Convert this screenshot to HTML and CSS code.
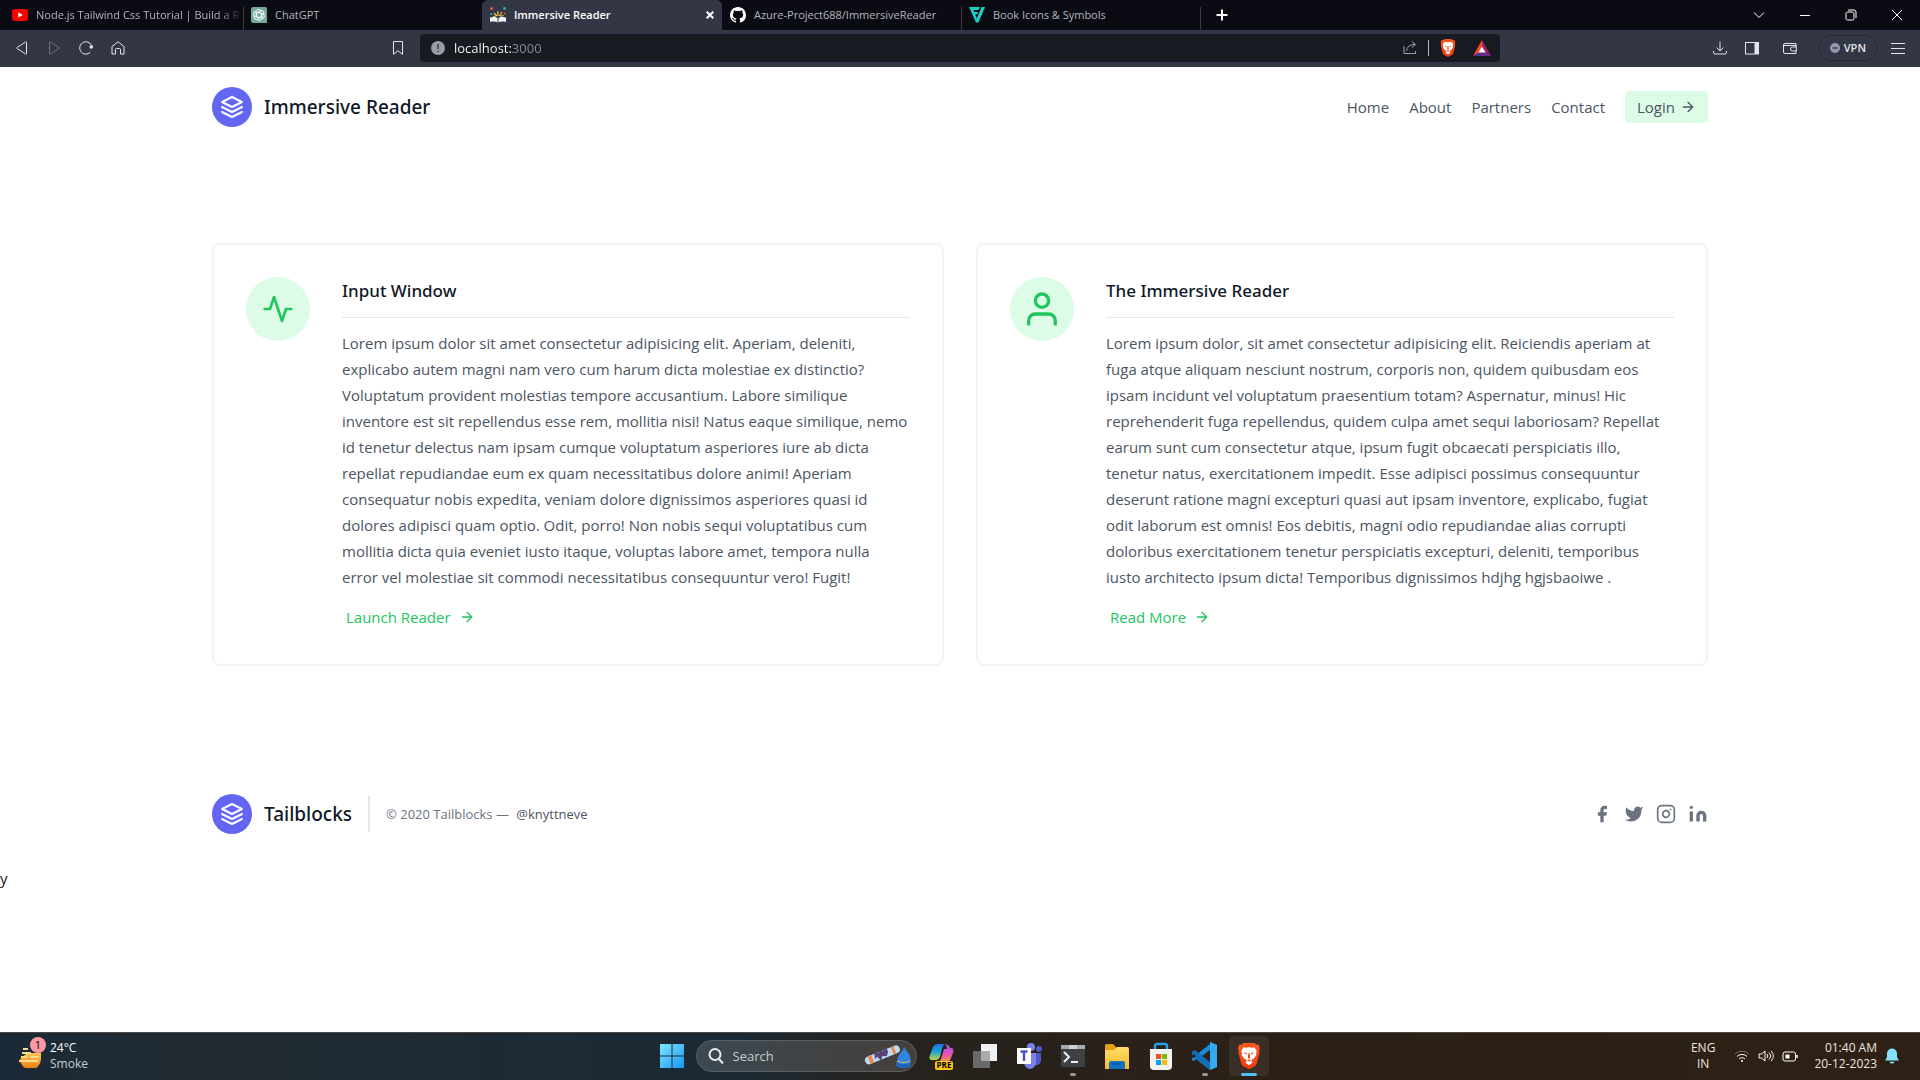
FILE: index.html
```html
<!DOCTYPE html>
<html lang="en">
<head>
<meta charset="utf-8">
<meta name="viewport" content="width=device-width, initial-scale=1">
<title>Immersive Reader</title>
<link rel="stylesheet" href="styles.css">
</head>
<body class="screen">

<svg class="defs" aria-hidden="true">
  <defs>
    <linearGradient id="g-brave" x1="0" y1="0" x2="0" y2="1"><stop offset="0" stop-color="#ff5a1f"/><stop offset="1" stop-color="#f03a10"/></linearGradient>
    <linearGradient id="g-win" x1="0" y1="0" x2="1" y2="1"><stop offset="0" stop-color="#7fe8ff"/><stop offset="1" stop-color="#1597f5"/></linearGradient>
    <linearGradient id="g-sun" x1="0" y1="0" x2="0" y2="1"><stop offset="0" stop-color="#ffc34d"/><stop offset="1" stop-color="#f07c12"/></linearGradient>
    <linearGradient id="g-cop1" x1="0" y1="0" x2="0" y2="1"><stop offset="0" stop-color="#1f6fe8"/><stop offset=".5" stop-color="#1fa8d8"/><stop offset="1" stop-color="#c8d430"/></linearGradient>
    <linearGradient id="g-cop2" x1="0" y1="0" x2="0" y2="1"><stop offset="0" stop-color="#a05af0"/><stop offset=".6" stop-color="#e84fae"/><stop offset="1" stop-color="#f5a03c"/></linearGradient>
    <linearGradient id="g-folder" x1="0" y1="0" x2="0" y2="1"><stop offset="0" stop-color="#ffdc6b"/><stop offset="1" stop-color="#f8bc2c"/></linearGradient>
    <symbol id="i-arrow" viewBox="0 0 24 24"><path d="M5 12h14M12 5l7 7-7 7"/></symbol>
    <symbol id="i-lion" viewBox="0 0 20 24"><path d="M10 0l5 .2 1.800 1.600 2-.2L20 5l-.7 2 .4 1.500-2.600 10c-.4 1.500-1 2-2 2.800L10 24l-5.100-2.700c-1-.8-1.600-1.300-2-2.800L.3 8.500.7 7 0 5l1.200-3.400 2 .2L5 .2z" fill="url(#g-brave)"/><path d="M10 4l2.500.4L15 4l2 3.500-.6 2.500.3 1-2.200 3.200-1.500.8L12 17l1.500 1L10 20.500 6.500 18 8 17l-1-2-1.500-.8L3.300 11l.3-1L3 7.500 5 4l2.500.4z" fill="#fff"/><path d="M5.200 8.500l3 .8-.6 1.500zM14.800 8.500l-3 .8.6 1.500zM9.400 9.500h1.200l.5 4-1.100 1-1.100-1zM8 15.800l2-.7 2 .7-2 1.200z" fill="#f4481a"/></symbol>
  </defs>
</svg>

<header class="browser">
  <div class="tabstrip">
    <button class="tab" type="button">
      <svg class="favicon" viewBox="0 0 16 16"><rect y="2" width="16" height="12" rx="3" fill="#f00"/><path d="M6.300 5.400v5.200L10.800 8z" fill="#fff"/></svg>
      <span class="tab-label tab-label-fade">Node.js Tailwind Css Tutorial | Build a R</span>
    </button>
    <button class="tab tab-divided" type="button">
      <svg class="favicon" viewBox="0 0 16 16"><path d="M2 0h12a2 2 0 0 1 2 2v14H2a2 2 0 0 1-2-2V2a2 2 0 0 1 2-2z" fill="#74aa9c"/><g fill="none" stroke="#fff" stroke-width="1"><path id="petal" d="M8 5.200L5.200 6.800V10M5 6.500V5a2.600 2.600 0 0 1 4.500-1.700"/><use href="#petal" transform="rotate(60 8 8)"/><use href="#petal" transform="rotate(120 8 8)"/><use href="#petal" transform="rotate(180 8 8)"/><use href="#petal" transform="rotate(240 8 8)"/><use href="#petal" transform="rotate(300 8 8)"/></g></svg>
      <span class="tab-label">ChatGPT</span>
    </button>
    <button class="tab tab-active" type="button">
      <svg class="favicon" viewBox="0 0 16 16"><path d="M0 10.500c3-1 6-.6 8 .8 2-1.400 5-1.800 8-.8V15c-3-.8-6-.6-8 .6-2-1.200-5-1.400-8-.6z" fill="#f2f2f4"/><path d="M8 11v4.500" stroke="#333645"/><path d="M3 9.500l3-.5M4 6l3 3M8 4v5M12 5L9.500 9M13.500 8.500l-3 .8" stroke="#f2c14e" stroke-width="1.200" fill="none"/><circle cx="1.500" cy="1.500" r="1.500" fill="#f0504f"/><circle cx="14.500" cy="1.500" r="1.400" fill="#28b7a4"/><circle cx="1.200" cy="7" r="1" fill="#28b7a4"/><circle cx="14.800" cy="6.500" r="1" fill="#f0504f"/></svg>
      <span class="tab-label">Immersive Reader</span>
      <svg class="tab-close" viewBox="0 0 8 8"><path d="M.7.700l6.600 6.600M7.300.7L.7 7.300"/></svg>
    </button>
    <button class="tab" type="button">
      <svg class="favicon" viewBox="0 0 16 16"><path fill="#fff" d="M8 0C3.580 0 0 3.580 0 8c0 3.540 2.290 6.530 5.470 7.590.4.070.55-.17.55-.38 0-.19-.01-.82-.01-1.490-2.010.37-2.530-.49-2.690-.94-.09-.23-.48-.94-.82-1.130-.28-.15-.68-.52-.01-.53.63-.01 1.080.58 1.230.82.72 1.210 1.870.87 2.330.66.070-.52.28-.87.51-1.070-1.780-.2-3.640-.89-3.640-3.950 0-.87.31-1.590.82-2.150-.08-.2-.36-1.020.08-2.120 0 0 .67-.21 2.200.82a7.600 7.600 0 0 1 4 0c1.530-1.040 2.200-.82 2.200-.82.44 1.100.16 1.920.08 2.120.51.56.82 1.270.82 2.150 0 3.070-1.870 3.750-3.650 3.950.29.25.54.73.54 1.480 0 1.070-.01 1.930-.01 2.200 0 .21.15.46.55.38A8 8 0 0 0 16 8c0-4.420-3.580-8-8-8z"/></svg>
      <span class="tab-label">Azure-Project688/ImmersiveReader</span>
    </button>
    <button class="tab tab-divided" type="button">
      <svg class="favicon" viewBox="0 0 16 16"><path d="M0 0h11L9.500 3H4.500l.8 2h3.700L8 7.500H6.300l1.500 4L12.500 0H16L9.500 15.500H7z" fill="#17cfc4"/></svg>
      <span class="tab-label">Book Icons &amp; Symbols</span>
    </button>
    <button class="new-tab" type="button" aria-label="New tab"><svg class="ic-12" viewBox="0 0 12 12"><path d="M6 .5v11M.5 6h11" stroke-width="2"/></svg></button>
    <div class="window-buttons">
      <button class="window-button" type="button" aria-label="Search tabs"><svg class="ic-12" viewBox="0 0 12 12"><path d="M1 3.500l5 5 5-5"/></svg></button>
      <button class="window-button" type="button" aria-label="Minimize"><svg class="ic-12" viewBox="0 0 12 12"><path d="M1 6.500h10"/></svg></button>
      <button class="window-button" type="button" aria-label="Restore"><svg class="ic-12" viewBox="0 0 12 12"><rect x="1" y="3" width="8" height="8" rx="1.500"/><path d="M3 1h6a2 2 0 0 1 2 2v6"/></svg></button>
      <button class="window-button" type="button" aria-label="Close"><svg class="ic-12" viewBox="0 0 12 12"><path d="M1 1l10 10M11 1L1 11"/></svg></button>
    </div>
  </div>

  <div class="toolbar">
    <div class="toolbar-left">
      <button class="tool" type="button" aria-label="Back"><svg class="ic-16" viewBox="0 0 16 16"><path d="M12.500 2.500v11a.6.6 0 0 1-1 .4L3.200 8.600a.7.7 0 0 1 0-1.200l8.300-5.300a.6.6 0 0 1 1 .4z"/></svg></button>
      <button class="tool tool-dim" type="button" aria-label="Forward"><svg class="ic-16" viewBox="0 0 16 16"><path d="M3.500 2.500v11a.6.6 0 0 0 1 .4l8.300-5.300a.7.7 0 0 0 0-1.200L4.500 2.100a.6.6 0 0 0-1 .4z"/></svg></button>
      <button class="tool" type="button" aria-label="Reload"><svg class="ic-16" viewBox="0 0 16 16"><path d="M12.300 12.300A6.200 6.200 0 1 1 14 7"/><circle cx="13.300" cy="7" r="1.800" class="solid"/></svg></button>
      <button class="tool" type="button" aria-label="Home"><svg class="ic-16" viewBox="0 0 16 16"><path d="M2 6.500L8 1.800l6 4.700V14h-3.500V9.500a1 1 0 0 0-1-1h-3a1 1 0 0 0-1 1V14H2z"/></svg></button>
    </div>
    <button class="tool" type="button" aria-label="Bookmark"><svg class="ic-16" viewBox="0 0 16 16"><path d="M3.500 1.500h9v12.800L8 10.800l-4.500 3.500z"/></svg></button>
    <div class="address">
      <svg class="site-info" viewBox="0 0 14 14"><circle cx="7" cy="7" r="7" fill="#9a9ca5"/><path d="M7 3v5M7 9.500v1.600" stroke="#41444f" stroke-width="1.600"/></svg>
      <input class="address-input" type="text" aria-label="Address" value="localhost:3000">
      <button class="address-tool" type="button" aria-label="Share"><svg class="ic-16 soft" viewBox="0 0 16 16"><path d="M2 6v7.500h11.500V11M4.500 11c.5-4 3-6.500 8.500-6.500M10 1.500l3.500 3L10 7.500"/></svg></button>
      <span class="address-rule"></span>
      <button class="address-tool" type="button" aria-label="Brave Shields"><svg class="shield" viewBox="0 0 20 24"><use href="#i-lion"/></svg></button>
      <button class="address-tool" type="button" aria-label="Brave Rewards"><svg class="rewards" viewBox="0 0 18 16"><path d="M9 0L0 16l9-5z" fill="#ff4724"/><path d="M9 0l9 16-9-5z" fill="#9e1f63"/><path d="M0 16h18l-9-6z" fill="#662d91"/><path d="M9 6.500l3.600 6H5.400z" fill="#fff"/></svg></button>
    </div>
    <div class="toolbar-right">
      <button class="tool" type="button" aria-label="Downloads"><svg class="ic-16" viewBox="0 0 16 16"><path d="M8 1.500v9M4.500 7.500L8 11l3.500-3.500M1.500 11v1.500a1.500 1.500 0 0 0 1.500 1.500h10a1.500 1.500 0 0 0 1.500-1.500V11"/></svg></button>
      <button class="tool" type="button" aria-label="Sidebar"><svg class="ic-16" viewBox="0 0 16 16"><rect x="1.500" y="2.500" width="13" height="11.500"/><path class="solid" d="M10.500 2.500h4V14h-4z"/></svg></button>
      <button class="tool" type="button" aria-label="Wallet"><svg class="ic-16" viewBox="0 0 16 16"><path d="M14 5.500V3.500H3a1.500 1.500 0 0 0-1.500 1.500v7A1.500 1.500 0 0 0 3 13.500h11V11M1.500 5.500h12.800v5.500H10.500a2 2 0 0 1 0-4h3.800"/></svg></button>
      <button class="vpn" type="button"><svg class="ic-10" viewBox="0 0 10 10"><circle cx="5" cy="5" r="5" fill="#9498ab"/><path d="M2.500 5h5" stroke="#333645" stroke-width="1.400"/></svg>VPN</button>
      <button class="tool" type="button" aria-label="Menu"><svg class="ic-16" viewBox="0 0 16 16"><path d="M1 3.500h14M1 8.500h14M1 13.500h14"/></svg></button>
    </div>
  </div>
</header>

<div class="page">
  <header class="container site-header">
    <a class="brand" href="#home"><svg class="brand-mark" viewBox="0 0 24 24"><path d="M12 2L2 7l10 5 10-5-10-5zM2 17l10 5 10-5M2 12l10 5 10-5"/></svg><span class="brand-name">Immersive Reader</span></a>
    <nav class="nav">
      <a class="nav-link" href="#home">Home</a>
      <a class="nav-link" href="#about">About</a>
      <a class="nav-link" href="#partners">Partners</a>
      <a class="nav-link" href="#contact">Contact</a>
      <button class="login" type="button">Login<svg class="arrow"><use href="#i-arrow"/></svg></button>
    </nav>
  </header>

  <main class="container cards">
    <article class="card">
      <div class="card-icon"><svg class="icon-pulse" viewBox="0 0 24 24"><path d="M22 12h-4l-3 9L9 3l-3 9H2"/></svg></div>
      <div class="card-body">
        <h2 class="card-title">Input Window</h2>
        <p class="card-text">Lorem ipsum dolor sit amet consectetur adipisicing elit. Aperiam, deleniti,<br>explicabo autem magni nam vero cum harum dicta molestiae ex distinctio?<br>Voluptatum provident molestias tempore accusantium. Labore similique<br>inventore est sit repellendus esse rem, mollitia nisi! Natus eaque similique, nemo<br>id tenetur delectus nam ipsam cumque voluptatum asperiores iure ab dicta<br>repellat repudiandae eum ex quam necessitatibus dolore animi! Aperiam<br>consequatur nobis expedita, veniam dolore dignissimos asperiores quasi id<br>dolores adipisci quam optio. Odit, porro! Non nobis sequi voluptatibus cum<br>mollitia dicta quia eveniet iusto itaque, voluptas labore amet, tempora nulla<br>error vel molestiae sit commodi necessitatibus consequuntur vero! Fugit!</p>
        <a class="card-link" href="#reader">Launch Reader<svg class="arrow"><use href="#i-arrow"/></svg></a>
      </div>
    </article>
    <article class="card">
      <div class="card-icon"><svg class="icon-user" viewBox="0 0 24 24"><path d="M20 21v-2a4 4 0 0 0-4-4H8a4 4 0 0 0-4 4v2"/><circle cx="12" cy="7" r="4"/></svg></div>
      <div class="card-body">
        <h2 class="card-title">The Immersive Reader</h2>
        <p class="card-text">Lorem ipsum dolor, sit amet consectetur adipisicing elit. Reiciendis aperiam at<br>fuga atque aliquam nesciunt nostrum, corporis non, quidem quibusdam eos<br>ipsam incidunt vel voluptatum praesentium totam? Aspernatur, minus! Hic<br>reprehenderit fuga repellendus, quidem culpa amet sequi laboriosam? Repellat<br>earum sunt cum consectetur atque, ipsum fugit obcaecati perspiciatis illo,<br>tenetur natus, exercitationem impedit. Esse adipisci possimus consequuntur<br>deserunt ratione magni excepturi quasi aut ipsam inventore, explicabo, fugiat<br>odit laborum est omnis! Eos debitis, magni odio repudiandae alias corrupti<br>doloribus exercitationem tenetur perspiciatis excepturi, deleniti, temporibus<br>iusto architecto ipsum dicta! Temporibus dignissimos hdjhg hgjsbaoiwe .</p>
        <a class="card-link" href="#more">Read More<svg class="arrow"><use href="#i-arrow"/></svg></a>
      </div>
    </article>
  </main>

  <footer class="container site-footer">
    <a class="brand" href="#home"><svg class="brand-mark" viewBox="0 0 24 24"><path d="M12 2L2 7l10 5 10-5-10-5zM2 17l10 5 10-5M2 12l10 5 10-5"/></svg><span class="brand-name">Tailblocks</span></a>
    <p class="copyright">© 2020 Tailblocks — <a class="handle" href="#knyttneve">@knyttneve</a></p>
    <div class="social">
      <a class="social-link" href="#facebook" aria-label="Facebook"><svg class="ic-20" viewBox="0 0 24 24"><path class="fill" d="M18 2h-3a5 5 0 0 0-5 5v3H7v4h3v8h4v-8h3l1-4h-4V7a1 1 0 0 1 1-1h3z"/></svg></a>
      <a class="social-link" href="#twitter" aria-label="Twitter"><svg class="ic-20" viewBox="0 0 24 24"><path class="fill" d="M23 3a10.900 10.900 0 0 1-3.140 1.530 4.480 4.480 0 0 0-7.860 3v1A10.660 10.660 0 0 1 3 4s-4 9 5 13a11.640 11.640 0 0 1-7 2c9 5 20 0 20-11.500a4.500 4.500 0 0 0-.08-.83A7.720 7.720 0 0 0 23 3z"/></svg></a>
      <a class="social-link" href="#instagram" aria-label="Instagram"><svg class="ic-20 line" viewBox="0 0 24 24"><rect width="20" height="20" x="2" y="2" rx="5"/><path d="M16 11.370A4 4 0 1 1 12.630 8 4 4 0 0 1 16 11.370zM17.500 6.500h.01"/></svg></a>
      <a class="social-link" href="#linkedin" aria-label="LinkedIn"><svg class="ic-20" viewBox="0 0 24 24"><path class="fill" d="M16 8a6 6 0 0 1 6 6v7h-4v-7a2 2 0 0 0-4 0v7h-4v-7a6 6 0 0 1 6-6zM2 9h4v12H2z"/><circle class="fill" cx="4" cy="4" r="2"/></svg></a>
    </div>
  </footer>
  <p class="stray">y</p>
</div>

<footer class="taskbar">
  <button class="weather" type="button">
    <span class="weather-icon">
      <svg class="ic-24" viewBox="0 0 24 24"><path d="M2 15a10 10 0 0 0 21 0V9H9z" fill="url(#g-sun)"/><path d="M5 5h5M4 9h9M3 13h6M12 13h9M1 17h8M2 17h18" stroke="#f6dc8e" stroke-width="2"/></svg>
      <span class="badge">1</span>
    </span>
    <span class="stack"><span class="bright">24°C</span><span>Smoke</span></span>
  </button>

  <div class="dock">
    <button class="app" type="button" aria-label="Start"><svg class="ic-24" viewBox="0 0 24 24"><path d="M0 0h11.500v11.500H0zM12.500 0H24v11.500H12.500zM0 12.500h11.500V24H0zM12.500 12.500H24V24H12.500z" fill="url(#g-win)"/></svg></button>
    <label class="search">
      <svg class="ic-16 lens" viewBox="0 0 16 16"><circle cx="7" cy="6.500" r="5.500"/><path d="M11 11l4 4.500"/></svg>
      <input class="search-input" type="search" placeholder="Search" aria-label="Search">
      <svg class="search-art" viewBox="0 0 48 26"><g transform="rotate(-22 18 12)"><rect x="0" y="8" width="37" height="8" rx="4" fill="#b9dcf5"/><path d="M4 8h4v8H4zM29 8h3v8h-3z" fill="#f08a4b"/><path d="M12 6l3 3 3-3 2 3 4-4 1 6-3 4-4-2-3 4-2-5-3 1z" fill="#5a4276"/></g><path d="M33 21c0-8 3-11 6-14l1-3 2 3c3 3 5 7 5 14z" fill="#2d86dc"/><path d="M32 19c5 3 10 3 15 0v4c-5 3-10 3-15 0z" fill="#1f66b8"/><path d="M33 18c4 2 9 2 13 0" stroke="#e5b64e" fill="none"/></svg>
    </label>
    <button class="app" type="button" aria-label="Copilot"><svg class="ic-28" viewBox="0 0 28 28"><path d="M11 2h8c-3 0-4 4-5 9-1 5-2 7-6 7H5c-3 0-3-3-2-5l3-8c1-2 3-3 5-3z" fill="url(#g-cop1)"/><path d="M17 2c2 0 3 2 3 5h-3l-3 10c-1 2-2 3-4 3h8c3 0 5-1 6-4l2-5c1-3 0-5-2-5h-1c-1-3-3-4-6-4z" fill="url(#g-cop2)"/><rect x="8" y="19" width="18" height="9" rx="2" fill="#fdc60a"/><text x="17" y="26" class="pre">PRE</text></svg></button>
    <button class="app" type="button" aria-label="Task view"><svg class="ic-28" viewBox="0 0 28 28"><path d="M2 9h17v17H2z" fill="#68696b"/><path d="M10 2h16v17H10z" fill="#f1f1f2"/><path d="M10 9h9v10h-9z" fill="#aaa"/></svg></button>
    <button class="app" type="button" aria-label="Teams"><svg class="ic-28" viewBox="0 0 28 28"><circle cx="16" cy="5" r="4" fill="#7b83eb"/><circle cx="24" cy="7" r="3" fill="#5059c9"/><path d="M19 11h7v8a5 5 0 0 1-6 4z" fill="#5059c9"/><path d="M9 11h12v9c0 4-3 7-6 7s-6-3-6-7z" fill="#7b83eb"/><path d="M2 6h14v16H2z" fill="#fff"/><path d="M5.500 9.500h7M9 9.500V19" stroke="#4b53bc" stroke-width="2.400"/></svg></button>
    <button class="app app-open" type="button" aria-label="Terminal"><svg class="ic-28" viewBox="0 0 28 28"><rect x="2" y="3" width="24" height="22" rx="1" fill="#3f4042"/><path d="M2 3h24v4H2z" fill="#a9aaab"/><path d="M10 3h8v4h-8z" fill="#d0d0d0"/><path d="M5 10l5 5-5 5M12 20h7" stroke="#eee" stroke-width="2" fill="none"/></svg></button>
    <button class="app" type="button" aria-label="File Explorer"><svg class="ic-28" viewBox="0 0 28 28"><path d="M2 4a2 2 0 0 1 2-2h6l3 3v5H2z" fill="#e0a012"/><path d="M2 8h9l3-3h10a2 2 0 0 1 2 2v20H2z" fill="url(#g-folder)"/><path d="M6 27v-6a2 2 0 0 1 2-2h12a2 2 0 0 1 2 2v6z" fill="#1273c4"/><path d="M10 22h8" stroke="#0d5a9e" stroke-width="2"/></svg></button>
    <button class="app" type="button" aria-label="Microsoft Store"><svg class="ic-28" viewBox="0 0 28 28"><path d="M8 8V4a2 2 0 0 1 2-2h8a2 2 0 0 1 2 2v4" stroke="#1fa5e8" stroke-width="2.400" fill="none"/><path d="M3 7h22v17a4 4 0 0 1-4 4H7a4 4 0 0 1-4-4z" fill="#f2f2f2"/><path d="M9 12h5v5H9z" fill="#f25022"/><path d="M15 12h5v5h-5z" fill="#7fba00"/><path d="M9 18h5v5H9z" fill="#00a4ef"/><path d="M15 18h5v5h-5z" fill="#ffb900"/></svg></button>
    <button class="app app-open" type="button" aria-label="Visual Studio Code"><svg class="ic-28" viewBox="0 0 28 28"><path d="M19 0l7 3v22l-7 3L5 17l-2 2-2-1v-2l18-14z" fill="#1b8ad6"/><path d="M1 10l2-2 2 1 14 11v7L1 13z" fill="#0f6fb8"/><path d="M19 8v12l-8-6z" fill="#2a2119"/><path d="M19 0l7 3v22l-7 3z" fill="#35a8f0"/><path d="M2 11.500L5 14l-3 2.500z" fill="#2a2119"/></svg></button>
    <button class="app app-current" type="button" aria-label="Brave"><svg class="lion" viewBox="0 0 20 24"><use href="#i-lion"/></svg></button>
  </div>

  <div class="tray">
    <button class="stack stack-center" type="button"><span>ENG</span><span>IN</span></button>
    <button class="status" type="button" aria-label="Network, volume and battery">
      <svg class="ic-16" viewBox="0 0 16 16"><path d="M1 6a10 10 0 0 1 14 0" opacity=".35"/><path d="M3 8.500a7 7 0 0 1 10 0M5 11a4.200 4.200 0 0 1 6 0"/><circle class="solid" cx="8" cy="13" r="1"/></svg>
      <svg class="ic-16" viewBox="0 0 16 16"><path d="M1 6h2.500L7 3v10L3.500 10H1zM9 6c1 1 1 3 0 4M11 4.500c2 2 2 5 0 7M13 3c3 3 3 7 0 10"/></svg>
      <svg class="ic-16" viewBox="0 0 16 16"><rect x="1" y="4" width="12.500" height="9" rx="2"/><path d="M15 7v3" stroke-width="1.500"/><path class="solid" d="M3.500 6.500h4v4h-4z"/></svg>
    </button>
    <button class="stack stack-end" type="button"><span>01:40 AM</span><span>20-12-2023</span></button>
    <button class="bell" type="button" aria-label="Notifications"><svg class="ic-16" viewBox="0 0 16 16"><path d="M8 .5a5 5 0 0 1 5 5V9l1.800 3.500H1.200L3 9V5.500a5 5 0 0 1 5-5zM5.500 13.700h5a2.600 2.600 0 0 1-5 0z" fill="#86e2fb" stroke="none"/></svg></button>
  </div>
</footer>
</body>
</html>
```

FILE: styles.css
```css
*, *::before, *::after { box-sizing: border-box; }

.screen {
  margin: 0;
  min-height: 100vh;
  display: flex;
  flex-direction: column;
  background: #fff;
  color: #111827;
  font-family: "Open Sans", "Noto Sans", sans-serif;
  font-size: 15px;
  line-height: 24px;
}

button, input { font: inherit; color: inherit; background: none; border: 0; padding: 0; margin: 0; outline: 0; }
button { cursor: pointer; }
a { color: inherit; text-decoration: none; }
h2, p { margin: 0; }
svg { display: block; flex: none; }

.defs { position: absolute; width: 0; height: 0; }
.ic-10 { width: 10px; height: 10px; }
.ic-12 { width: 12px; height: 12px; }
.ic-16 { width: 16px; height: 16px; }
.ic-20 { width: 20px; height: 20px; }
.ic-24 { width: 24px; height: 24px; }
.ic-28 { width: 28px; height: 28px; }
.fill { fill: currentColor; }

/* Browser window */
.browser { background: #333645; color: #e4e5ea; font-size: 11px; line-height: 16px; }
.browser .ic-12, .browser .ic-16, .tab-close, .tray .ic-16 { fill: none; stroke: currentColor; }
.browser .solid, .tray .solid { fill: currentColor; stroke: none; }

.tabstrip { display: flex; height: 30px; background: #0b0b14; }
.tab {
  display: flex;
  align-items: center;
  gap: 8px;
  flex: 0 1 239px;
  min-width: 0;
  padding: 0 8px;
  text-align: left;
  color: #b4b5bb;
}
.tab:first-child { flex-basis: 243px; padding: 0 0 0 12px; }
.tab-divided { background: linear-gradient(#3b3b42, #3b3b42) left bottom / 1px 23px no-repeat; }
.tab-active { flex-basis: 240px; background: #333645; color: #fff; border-radius: 6px 6px 0 0; font-weight: 600; }
.favicon { width: 16px; height: 16px; }
.tab-label { flex: 1; overflow: hidden; white-space: nowrap; }
.tab-label-fade { mask-image: linear-gradient(90deg, #000 88%, transparent); }
.tab-close { width: 8px; height: 8px; stroke-width: 2; }
.new-tab { display: grid; place-items: center; width: 44px; color: #fff; background: linear-gradient(#3b3b42, #3b3b42) left bottom / 1px 23px no-repeat; }
.window-buttons { display: flex; margin-left: auto; color: #fff; }
.window-button { display: grid; place-items: center; width: 46px; }

.toolbar { display: flex; align-items: center; height: 37px; padding: 0 0 2px 6px; }
.toolbar-left { display: flex; flex: 0 1 376px; }
.tool { display: grid; place-items: center; width: 32px; height: 32px; }
.tool-dim { color: #6f717d; }
.address {
  display: flex;
  align-items: center;
  flex: 0 1 1080px;
  height: 28px;
  margin-left: 6px;
  padding: 0 1px 0 11px;
  border-radius: 4px;
  background: #181a21;
}
.site-info { width: 14px; height: 14px; }
.address-input {
  flex: 1;
  min-width: 0;
  margin-left: 9px;
  font-size: 13px;
  color: #fff;
  -webkit-text-fill-color: transparent;
  background: linear-gradient(90deg, #fff 57px, #8b8d94 57px);
  -webkit-background-clip: text;
  background-clip: text;
}
.address-tool { display: grid; place-items: center; width: 34px; height: 28px; }
.soft { color: #a0a2a9; }
.address-rule { width: 1px; height: 16px; margin: 0 2px 0 1px; background: #b6b8be; }
.shield { width: 16px; height: 18px; }
.rewards { width: 18px; height: 16px; }
.toolbar-right { display: flex; align-items: center; margin-left: auto; padding-right: 6px; }
.toolbar-right .tool:nth-child(3) { margin-left: 6px; }
.vpn {
  display: flex;
  align-items: center;
  gap: 4px;
  height: 26px;
  margin: 0 4px 0 12px;
  padding: 0 11px;
  border: 1px solid #262935;
  border-radius: 13px;
  font-weight: 600;
}

/* Site */
.page { flex: 1; }
.container { width: 100%; max-width: 1536px; margin: 0 auto; padding: 0 20px; }
.site-header, .site-footer { display: flex; align-items: center; }
.site-header { padding-top: 20px; padding-bottom: 20px; }
.brand { display: flex; align-items: center; gap: 12px; }
.brand-mark { width: 40px; height: 40px; padding: 8px; border-radius: 50%; background: #6366f1; fill: none; stroke: #fff; stroke-width: 2; stroke-linecap: round; stroke-linejoin: round; }
.brand-name { font-family: "Noto Sans", "Open Sans", sans-serif; font-size: 19px; line-height: 28px; font-weight: 500; }
.nav { display: flex; align-items: center; gap: 20px; margin-left: auto; color: #4b5563; }
.login { display: flex; align-items: center; gap: 5px; height: 32px; padding: 0 12px; border-radius: 4px; background: #dcfce7; }
.arrow { width: 16px; height: 16px; fill: none; stroke: currentColor; stroke-width: 2; stroke-linecap: round; stroke-linejoin: round; }

.cards { display: grid; grid-template-columns: 1fr 1fr; gap: 32px; padding-top: 96px; padding-bottom: 96px; }
.card { display: flex; gap: 32px; padding: 32px; border: 2px solid #f3f4f6; border-radius: 8px; }
.card-icon { display: grid; place-items: center; flex: none; width: 64px; height: 64px; border-radius: 50%; background: #dcfce7; color: #22c55e; }
.icon-pulse, .icon-user { fill: none; stroke: currentColor; stroke-width: 2; stroke-linecap: round; stroke-linejoin: round; }
.icon-pulse { width: 32px; height: 32px; }
.icon-user { width: 40px; height: 40px; }
.card-body { flex: 1; min-width: 0; }
.card-title { padding-bottom: 12px; border-bottom: 1px solid #e5e7eb; font-family: "Noto Sans", "Open Sans", sans-serif; font-size: 17px; line-height: 28px; font-weight: 500; }
.card-text { margin: 12px 0; line-height: 26px; color: #4b5563; }
.card-link { display: flex; align-items: center; gap: 8px; width: fit-content; height: 30px; padding: 0 4px; color: #22c55e; }

.site-footer { padding-top: 32px; padding-bottom: 32px; }
.copyright { margin-left: 16px; padding: 8px 0 8px 16px; border-left: 2px solid #e5e7eb; font-size: 13px; line-height: 20px; color: #6b7280; }
.handle { margin-left: 4px; color: #4b5563; }
.social { display: flex; gap: 12px; margin-left: auto; color: #6b7280; }
.line { fill: none; stroke: currentColor; stroke-width: 2; stroke-linecap: round; stroke-linejoin: round; }

/* Taskbar */
.taskbar {
  display: grid;
  grid-template-columns: 1fr auto 1fr;
  align-items: center;
  height: 48px;
  box-shadow: inset 0 1px #4c4a48;
  background: linear-gradient(90deg, #1b2a37 0, #212a31 10%, #1c2a35 38%, #27221d 47%, #2b2017 70%, #2e2014 100%);
  color: #e9e6e3;
  font-size: 12px;
  line-height: 16px;
}
.stack { display: flex; flex-direction: column; line-height: 16px; text-align: left; }
.stack-center { align-items: center; }
.stack-end { align-items: flex-end; }
.bright { color: #fff; }
.weather { display: flex; align-items: center; gap: 8px; justify-self: start; padding-left: 18px; color: #c9ccce; }
.weather-icon { position: relative; }
.badge { position: absolute; top: -7px; right: -4px; width: 16px; height: 16px; border-radius: 50%; background: #ff99a4; color: #000; font-size: 11px; text-align: center; }

.dock { display: flex; align-items: center; gap: 4px; }
.app { position: relative; display: grid; place-items: center; width: 40px; height: 40px; border-radius: 4px; }
.app-open::after, .app-current::after { content: ""; position: absolute; bottom: 0; left: 17px; width: 6px; height: 3px; border-radius: 2px; background: #9b9894; }
.app-current { background: #3a2f26; }
.app-current::after { left: 12px; width: 16px; background: #4cc2ff; }
.lion { width: 22px; height: 28px; }
.pre { font-size: 8px; font-weight: 700; text-anchor: middle; fill: #000; }
.search { display: flex; align-items: center; width: 221px; height: 32px; padding: 0 4px 0 11px; border: 1px solid #5b5f62; border-radius: 16px; background: linear-gradient(90deg, #3b4852, #453f3a); }
.lens { fill: none; stroke: #e8eaec; stroke-width: 2; }
.search-input { flex: 1; min-width: 0; margin-left: 9px; font-size: 13px; }
.search-input::placeholder { color: #c6cace; opacity: 1; }
.search-art { width: 48px; height: 26px; }

.tray { display: flex; align-items: center; justify-self: end; padding-right: 20px; }
.status { display: flex; gap: 8px; margin: 0 16px 0 19px; color: #fff; }
.bell { margin-left: 7px; }
```
